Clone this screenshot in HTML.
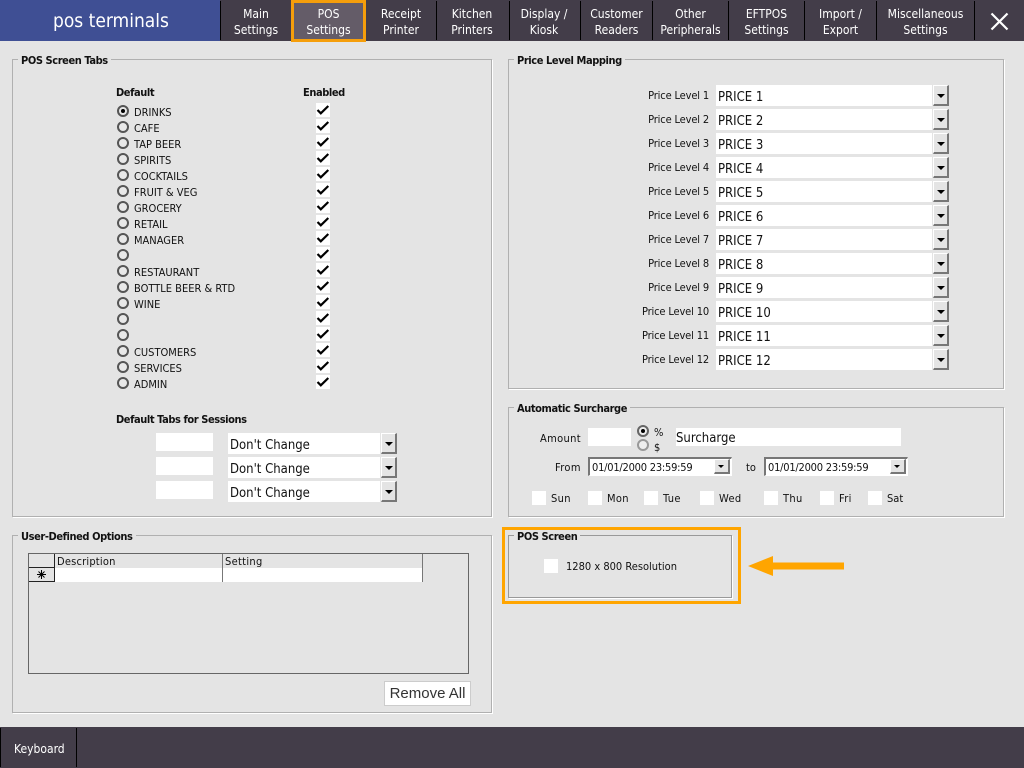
<!DOCTYPE html>
<html><head><meta charset="utf-8"><title>POS Terminals</title>
<style>
html,body{margin:0;padding:0}
body{width:1024px;height:768px;overflow:hidden;background:#e4e4e4;position:relative;font-family:"DejaVu Sans Condensed","Liberation Sans",sans-serif;font-size:11px;color:#111}
.a,.t{position:absolute}
.t{white-space:nowrap;line-height:14px;margin-top:1px}
.b{font-weight:bold;letter-spacing:-.42px}
.p{letter-spacing:-.15px}
.s{letter-spacing:.35px}
.bar{background:#433d49;left:0;width:1024px}
.dv{position:absolute;top:1px;width:1px;height:39px;background:#000}
.n{position:absolute;top:6px;color:#fff;font-size:12px;line-height:16px;text-align:center;white-space:nowrap}
.g{position:absolute;border:1px solid #b0b0b0;box-shadow:1px 1px 0 #fff;box-sizing:border-box}
.gt{position:absolute;background:#e4e4e4;padding:0 3px;font-weight:bold;font-size:11px;line-height:14px;white-space:nowrap;color:#111;margin-top:1px;letter-spacing:-.42px}
.r{position:absolute;left:117px;width:12px;height:12px;box-sizing:border-box;border:2px solid #555;border-radius:50%;background:#e8e8e8}
.c{position:absolute;left:316px;width:14px;height:14px;background:#fff}
.c svg{position:absolute;left:0;top:0}
.w{position:absolute;background:#fff}
.cb{position:absolute;background:#fff;font-size:13px;line-height:25px;padding-left:2px;box-sizing:border-box;white-space:nowrap}
.bt{position:absolute;width:16px;height:21px;box-sizing:border-box;background:#e4e4e4;border:1px solid;border-width:1px 2px 2px 1px;border-color:#fff #777 #777 #fff}
.bt:after{content:"";position:absolute;left:3px;top:8px;border:4px solid transparent;border-top:4px solid #000;border-bottom:0}
.dt{position:absolute;height:19px;box-sizing:border-box;background:#fff;border:1px solid;border-width:2px 1px 1px 2px;border-color:#777 #fff #fff #777;font-size:11px;line-height:17px;padding-left:2px;white-space:nowrap;letter-spacing:-.22px}
.dt i{position:absolute;right:1px;top:0;width:16px;height:15px;background:#e4e4e4;border:1px solid;border-width:1px 2px 2px 1px;border-color:#fff #777 #777 #fff;box-sizing:border-box}
.dt i:after{content:"";position:absolute;left:3px;top:5px;border:3px solid transparent;border-top:3.500px solid #000;border-bottom:0}
</style></head><body>
<div class="a bar" style="top:0;height:41px"></div>
<div class="a" style="left:0;top:0;width:220px;height:41px;background:#3f4f94"></div>
<div class="t" style="left:53px;top:9px;font-size:19px;line-height:22px;color:#fff">pos terminals</div>
<div class="dv" style="left:220px"></div><div class="dv" style="left:436px"></div><div class="dv" style="left:509px"></div><div class="dv" style="left:580px"></div><div class="dv" style="left:652px"></div><div class="dv" style="left:728px"></div><div class="dv" style="left:804px"></div><div class="dv" style="left:876px"></div><div class="dv" style="left:974px"></div>
<div class="a" style="left:291px;top:0;width:75px;height:42px;box-sizing:border-box;border:3px solid #f59e0b;background:#645c68"></div>
<div class="n" style="left:221px;width:70px">Main<br>Settings</div>
<div class="n" style="left:292px;width:73px">POS<br>Settings</div>
<div class="n" style="left:366px;width:70px">Receipt<br>Printer</div>
<div class="n" style="left:436px;width:72px">Kitchen<br>Printers</div>
<div class="n" style="left:509px;width:70px">Display /<br>Kiosk</div>
<div class="n" style="left:581px;width:71px">Customer<br>Readers</div>
<div class="n" style="left:653px;width:75px">Other<br>Peripherals</div>
<div class="n" style="left:729px;width:75px">EFTPOS<br>Settings</div>
<div class="n" style="left:805px;width:71px">Import /<br>Export</div>
<div class="n" style="left:877px;width:97px">Miscellaneous<br>Settings</div>
<svg class="a" style="left:990px;top:12px" width="19" height="19" viewBox="0 0 19 19"><path d="M1.500 1.500L17.500 17.500M17.500 1.500L1.500 17.500" stroke="#fff" stroke-width="2.200" fill="none"/></svg>

<div class="g" style="left:12px;top:59px;width:480px;height:458px"></div>
<div class="gt" style="left:18px;top:53px">POS Screen Tabs</div>
<div class="t b" style="left:116px;top:85px">Default</div>
<div class="t b" style="left:303px;top:85px">Enabled</div>

<div class="r" style="top:105px"><div class="a" style="left:2px;top:2px;width:4px;height:4px;border-radius:50%;background:#000"></div></div>
<div class="r" style="top:121px"></div><div class="r" style="top:137px"></div><div class="r" style="top:153px"></div><div class="r" style="top:169px"></div><div class="r" style="top:185px"></div><div class="r" style="top:201px"></div><div class="r" style="top:217px"></div><div class="r" style="top:233px"></div><div class="r" style="top:249px"></div><div class="r" style="top:265px"></div><div class="r" style="top:281px"></div><div class="r" style="top:297px"></div><div class="r" style="top:313px"></div><div class="r" style="top:329px"></div><div class="r" style="top:345px"></div><div class="r" style="top:361px"></div><div class="r" style="top:377px"></div>

<div class="t" style="left:134px;top:105px">DRINKS</div>
<div class="t" style="left:134px;top:121px">CAFE</div>
<div class="t" style="left:134px;top:137px">TAP BEER</div>
<div class="t" style="left:134px;top:153px">SPIRITS</div>
<div class="t" style="left:134px;top:169px">COCKTAILS</div>
<div class="t" style="left:134px;top:185px">FRUIT &amp; VEG</div>
<div class="t" style="left:134px;top:201px">GROCERY</div>
<div class="t" style="left:134px;top:217px">RETAIL</div>
<div class="t" style="left:134px;top:233px">MANAGER</div>
<div class="t" style="left:134px;top:265px">RESTAURANT</div>
<div class="t" style="left:134px;top:281px">BOTTLE BEER &amp; RTD</div>
<div class="t" style="left:134px;top:297px">WINE</div>
<div class="t" style="left:134px;top:345px">CUSTOMERS</div>
<div class="t" style="left:134px;top:361px">SERVICES</div>
<div class="t" style="left:134px;top:377px">ADMIN</div>

<div class="c" style="top:103px"><svg width="14" height="14"><path d="M1.500 7L4.800 10.300L12.300 3" stroke="#000" stroke-width="2.200" fill="none"/></svg></div>
<div class="c" style="top:119px"><svg width="14" height="14"><path d="M1.500 7L4.800 10.300L12.300 3" stroke="#000" stroke-width="2.200" fill="none"/></svg></div>
<div class="c" style="top:135px"><svg width="14" height="14"><path d="M1.500 7L4.800 10.300L12.300 3" stroke="#000" stroke-width="2.200" fill="none"/></svg></div>
<div class="c" style="top:151px"><svg width="14" height="14"><path d="M1.500 7L4.800 10.300L12.300 3" stroke="#000" stroke-width="2.200" fill="none"/></svg></div>
<div class="c" style="top:167px"><svg width="14" height="14"><path d="M1.500 7L4.800 10.300L12.300 3" stroke="#000" stroke-width="2.200" fill="none"/></svg></div>
<div class="c" style="top:183px"><svg width="14" height="14"><path d="M1.500 7L4.800 10.300L12.300 3" stroke="#000" stroke-width="2.200" fill="none"/></svg></div>
<div class="c" style="top:199px"><svg width="14" height="14"><path d="M1.500 7L4.800 10.300L12.300 3" stroke="#000" stroke-width="2.200" fill="none"/></svg></div>
<div class="c" style="top:215px"><svg width="14" height="14"><path d="M1.500 7L4.800 10.300L12.300 3" stroke="#000" stroke-width="2.200" fill="none"/></svg></div>
<div class="c" style="top:231px"><svg width="14" height="14"><path d="M1.500 7L4.800 10.300L12.300 3" stroke="#000" stroke-width="2.200" fill="none"/></svg></div>
<div class="c" style="top:247px"><svg width="14" height="14"><path d="M1.500 7L4.800 10.300L12.300 3" stroke="#000" stroke-width="2.200" fill="none"/></svg></div>
<div class="c" style="top:263px"><svg width="14" height="14"><path d="M1.500 7L4.800 10.300L12.300 3" stroke="#000" stroke-width="2.200" fill="none"/></svg></div>
<div class="c" style="top:279px"><svg width="14" height="14"><path d="M1.500 7L4.800 10.300L12.300 3" stroke="#000" stroke-width="2.200" fill="none"/></svg></div>
<div class="c" style="top:295px"><svg width="14" height="14"><path d="M1.500 7L4.800 10.300L12.300 3" stroke="#000" stroke-width="2.200" fill="none"/></svg></div>
<div class="c" style="top:311px"><svg width="14" height="14"><path d="M1.500 7L4.800 10.300L12.300 3" stroke="#000" stroke-width="2.200" fill="none"/></svg></div>
<div class="c" style="top:327px"><svg width="14" height="14"><path d="M1.500 7L4.800 10.300L12.300 3" stroke="#000" stroke-width="2.200" fill="none"/></svg></div>
<div class="c" style="top:343px"><svg width="14" height="14"><path d="M1.500 7L4.800 10.300L12.300 3" stroke="#000" stroke-width="2.200" fill="none"/></svg></div>
<div class="c" style="top:359px"><svg width="14" height="14"><path d="M1.500 7L4.800 10.300L12.300 3" stroke="#000" stroke-width="2.200" fill="none"/></svg></div>
<div class="c" style="top:375px"><svg width="14" height="14"><path d="M1.500 7L4.800 10.300L12.300 3" stroke="#000" stroke-width="2.200" fill="none"/></svg></div>

<div class="t b" style="left:116px;top:412px">Default Tabs for Sessions</div>
<div class="w" style="left:156px;top:433px;width:57px;height:18px"></div>
<div class="w" style="left:156px;top:457px;width:57px;height:18px"></div>
<div class="w" style="left:156px;top:481px;width:57px;height:18px"></div>
<div class="cb" style="left:228px;top:433px;width:152px;height:21px">Don't Change</div><div class="bt" style="left:381px;top:433px"></div>
<div class="cb" style="left:228px;top:457px;width:152px;height:21px">Don't Change</div><div class="bt" style="left:381px;top:457px"></div>
<div class="cb" style="left:228px;top:481px;width:152px;height:21px">Don't Change</div><div class="bt" style="left:381px;top:481px"></div>

<div class="g" style="left:12px;top:535px;width:480px;height:178px"></div>
<div class="gt" style="left:18px;top:529px">User-Defined Options</div>
<div class="a" style="left:28px;top:553px;width:441px;height:121px;box-sizing:border-box;border:1px solid #666"></div>
<div class="a" style="left:55px;top:568px;width:367px;height:14px;background:#fff"></div>
<div class="a" style="left:54px;top:554px;width:1px;height:28px;background:#222"></div>
<div class="a" style="left:222px;top:554px;width:1px;height:28px;background:#777"></div>
<div class="a" style="left:422px;top:554px;width:1px;height:28px;background:#777"></div>
<div class="a" style="left:29px;top:567px;width:25px;height:1px;background:#222"></div>
<div class="a" style="left:29px;top:581px;width:26px;height:1px;background:#222"></div>
<div class="t s" style="left:57px;top:554px;letter-spacing:.2px">Description</div>
<div class="t s" style="left:225px;top:554px;letter-spacing:.3px">Setting</div>
<svg class="a" style="left:36px;top:569px" width="11" height="11" viewBox="0 0 11 11"><path d="M5.500 1V10M1 5.500H10M2.500 2.500L8.500 8.500M8.500 2.500L2.500 8.500" stroke="#000" stroke-width="1" fill="none"/></svg>
<div class="a" style="left:384px;top:681px;width:87px;height:25px;box-sizing:border-box;background:#fff;border:1px solid #ccc;font-family:'Liberation Sans',sans-serif;font-size:15px;line-height:23px;text-align:center;color:#333">Remove All</div>

<div class="g" style="left:508px;top:59px;width:496px;height:330px"></div>
<div class="gt" style="left:514px;top:53px">Price Level Mapping</div>

<div class="t p" style="left:609px;width:100px;text-align:right;top:88px">Price Level 1</div><div class="cb" style="left:716px;top:85px;width:216px;height:21px">PRICE 1</div><div class="bt" style="left:933px;top:85px"></div>
<div class="t p" style="left:609px;width:100px;text-align:right;top:112px">Price Level 2</div><div class="cb" style="left:716px;top:109px;width:216px;height:21px">PRICE 2</div><div class="bt" style="left:933px;top:109px"></div>
<div class="t p" style="left:609px;width:100px;text-align:right;top:136px">Price Level 3</div><div class="cb" style="left:716px;top:133px;width:216px;height:21px">PRICE 3</div><div class="bt" style="left:933px;top:133px"></div>
<div class="t p" style="left:609px;width:100px;text-align:right;top:160px">Price Level 4</div><div class="cb" style="left:716px;top:157px;width:216px;height:21px">PRICE 4</div><div class="bt" style="left:933px;top:157px"></div>
<div class="t p" style="left:609px;width:100px;text-align:right;top:184px">Price Level 5</div><div class="cb" style="left:716px;top:181px;width:216px;height:21px">PRICE 5</div><div class="bt" style="left:933px;top:181px"></div>
<div class="t p" style="left:609px;width:100px;text-align:right;top:208px">Price Level 6</div><div class="cb" style="left:716px;top:205px;width:216px;height:21px">PRICE 6</div><div class="bt" style="left:933px;top:205px"></div>
<div class="t p" style="left:609px;width:100px;text-align:right;top:232px">Price Level 7</div><div class="cb" style="left:716px;top:229px;width:216px;height:21px">PRICE 7</div><div class="bt" style="left:933px;top:229px"></div>
<div class="t p" style="left:609px;width:100px;text-align:right;top:256px">Price Level 8</div><div class="cb" style="left:716px;top:253px;width:216px;height:21px">PRICE 8</div><div class="bt" style="left:933px;top:253px"></div>
<div class="t p" style="left:609px;width:100px;text-align:right;top:280px">Price Level 9</div><div class="cb" style="left:716px;top:277px;width:216px;height:21px">PRICE 9</div><div class="bt" style="left:933px;top:277px"></div>
<div class="t p" style="left:609px;width:100px;text-align:right;top:304px">Price Level 10</div><div class="cb" style="left:716px;top:301px;width:216px;height:21px">PRICE 10</div><div class="bt" style="left:933px;top:301px"></div>
<div class="t p" style="left:609px;width:100px;text-align:right;top:328px">Price Level 11</div><div class="cb" style="left:716px;top:325px;width:216px;height:21px">PRICE 11</div><div class="bt" style="left:933px;top:325px"></div>
<div class="t p" style="left:609px;width:100px;text-align:right;top:352px">Price Level 12</div><div class="cb" style="left:716px;top:349px;width:216px;height:21px">PRICE 12</div><div class="bt" style="left:933px;top:349px"></div>

<div class="g" style="left:508px;top:407px;width:496px;height:110px"></div>
<div class="gt" style="left:514px;top:401px">Automatic Surcharge</div>
<div class="t s" style="left:540px;top:431px">Amount</div>
<div class="w" style="left:588px;top:428px;width:43px;height:18px"></div>
<div class="a" style="left:637px;top:425px;width:12px;height:12px;box-sizing:border-box;border:2px solid #666;border-radius:50%;background:#eee"><div class="a" style="left:2px;top:2px;width:4px;height:4px;border-radius:50%;background:#000"></div></div>
<div class="a" style="left:637px;top:439px;width:12px;height:12px;box-sizing:border-box;border:2px solid #999;border-radius:50%;background:#eee"></div>
<div class="t" style="left:654px;top:425px">%</div>
<div class="t" style="left:654px;top:440px">$</div>
<div class="w" style="left:676px;top:428px;width:225px;height:18px;font-size:13px;line-height:21px;white-space:nowrap;overflow:hidden">Surcharge</div>
<div class="t s" style="left:555px;top:460px">From</div>
<div class="dt" style="left:588px;top:457px;width:144px">01/01/2000 23:59:59<i></i></div>
<div class="t" style="left:746px;top:460px">to</div>
<div class="dt" style="left:764px;top:457px;width:144px">01/01/2000 23:59:59<i></i></div>
<div class="w" style="left:532px;top:491px;width:14px;height:14px"></div><div class="t s" style="left:551px;top:491px">Sun</div>
<div class="w" style="left:588px;top:491px;width:14px;height:14px"></div><div class="t s" style="left:607px;top:491px">Mon</div>
<div class="w" style="left:644px;top:491px;width:14px;height:14px"></div><div class="t s" style="left:663px;top:491px">Tue</div>
<div class="w" style="left:700px;top:491px;width:14px;height:14px"></div><div class="t s" style="left:719px;top:491px">Wed</div>
<div class="w" style="left:764px;top:491px;width:14px;height:14px"></div><div class="t s" style="left:783px;top:491px">Thu</div>
<div class="w" style="left:820px;top:491px;width:14px;height:14px"></div><div class="t s" style="left:839px;top:491px">Fri</div>
<div class="w" style="left:868px;top:491px;width:14px;height:14px"></div><div class="t" style="left:887px;top:491px">Sat</div>

<div class="a" style="left:502px;top:527px;width:239px;height:77px;box-sizing:border-box;border:3px solid #ffa500"></div>
<div class="g" style="left:508px;top:535px;width:224px;height:63px;border-color:#999"></div>
<div class="gt" style="left:514px;top:529px">POS Screen</div>
<div class="w" style="left:544px;top:559px;width:14px;height:14px"></div>
<div class="t" style="left:566px;top:559px">1280 x 800 Resolution</div>
<svg class="a" style="left:747px;top:555px" width="98" height="22" viewBox="0 0 98 22"><path d="M1 11L26 1V7.500H97V14.500H26V21Z" fill="#ffa500"/></svg>

<div class="a bar" style="top:727px;height:41px"></div>
<div class="a" style="left:0;top:728px;width:1px;height:39px;background:#000"></div>
<div class="a" style="left:76px;top:728px;width:1px;height:39px;background:#000"></div>
<div class="t" style="left:14px;top:741px;color:#fff;font-size:12px">Keyboard</div>
</body></html>
